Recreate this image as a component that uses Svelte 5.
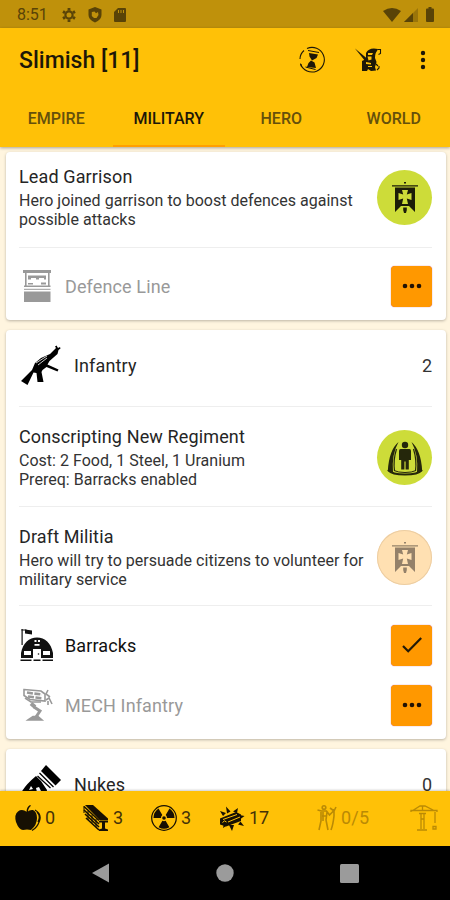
<script>
  const tabs = ['EMPIRE', 'MILITARY', 'HERO', 'WORLD'];
  const active = 'MILITARY';
  const resources = [
    { icon: 'apple', value: '0' },
    { icon: 'steel', value: '3' },
    { icon: 'uranium', value: '3' },
    { icon: 'energy', value: '17' },
    { icon: 'people', value: '0/5', dim: true },
    { icon: 'crane', value: '', dim: true }
  ];
</script>

{#snippet banner()}
  <svg width="28" height="34" viewBox="0 0 28 34" fill="currentColor">
    <path d="M13 1h2v1.500h-2zM1 4.200h26v1.300H1z" />
    <path fill-rule="evenodd" d="M4 6.500h20v24.500l-6-6h-8l-6 6zM11 9l1.200 4.500L7.500 12v7l4.700-1.500L11 23h6l-1.200-5.500 4.700 1.500v-7l-4.700 1.500L17 9z" />
    <path d="M12.200 26.500h3.600v2.500l-.8 3h-2l-.8-3z" />
  </svg>
{/snippet}

{#snippet action(title, lines, kind, dim = false)}
  <div class="action">
    <div class="copy">
      <h3>{title}</h3>
      <p>{lines[0]}<br />{lines[1]}</p>
    </div>
    <button class="round" class:dim aria-label={title}>
      {#if kind === 'banner'}
        {@render banner()}
      {:else}
        <svg width="36" height="36" viewBox="0 0 36 36" fill="#25270b">
          <circle cx="18" cy="5" r="3.200" />
          <path d="M13.500 9h9q1.500 0 1.500 2v9h-2.200v9.500h-3.200v-8h-1.200v8h-3.200V20H12v-9q0-2 1.500-2z" />
          <path d="M11.500 2Q2 10 .8 31L6 32.800Q4.500 14 11.500 2zM24.500 2Q34 10 35.200 31L30 32.800Q31.500 14 24.500 2z" />
          <path d="M9.500 9Q6 20 7.500 31M26.500 9Q30 20 28.500 31" fill="none" stroke="#25270b" stroke-width="1.200" />
          <path d="M1 30q4 4.500 17 4.500T35 30" fill="none" stroke="#25270b" stroke-width="2" />
          <path d="M7 30.500q4 2 11 2t11-2" fill="none" stroke="#25270b" />
        </svg>
      {/if}
    </button>
  </div>
{/snippet}

{#snippet building(label, kind, done, dim)}
  <div class="building" class:dim>
    <span class="thumb">
      {#if kind === 'defence'}
        <svg width="36" height="36" viewBox="0 0 36 36" fill="currentColor">
          <path d="M4 2h28v3H4zM5 23.500h26.500V34H5zM6 5h1.600v13H6zM29 5h1.600v13H29zM5 17.500h26.500V19H5z" />
          <path d="M9 7.500h18v4h-2v-1.500h-5v1.500h-3V10h-5v1.500H9zM9 15h5v1.600H9zM22 14.500h5v2h-5z" />
          <path d="M5 20.800h26.500v1H5z" />
        </svg>
      {:else if kind === 'barracks'}
        <svg width="36" height="36" viewBox="0 0 36 36" fill="currentColor">
          <path d="M2.500 2h1.200v16H2.500zM6 2.500l7 1v4l-7-1z" />
          <path d="M2.500 2.500h5v1h-5z" />
          <path fill-rule="evenodd" d="M2 31v-5C4 16 10 10.500 18 10.500S32 16 34 26v5H22v-9h-8v9zM5 24v4h7v-4zM24 24v4h7v-4zM15.500 13v2h2v-2zM19 13v2h2v-2zM15.500 17v1.800h5V17z" />
          <path d="M1.500 32.500h11v1.500h-11zM14.500 32.500h7v1.500h-7zM23.500 32.500H34v1.500H23.500z" />
          <circle cx="19.500" cy="27" r=".8" />
        </svg>
      {:else}
        <svg width="36" height="36" viewBox="0 0 36 36" fill="none" stroke="currentColor" stroke-width="1.600">
          <path d="M5 2.500l17 1.500 4 3v7l-15-1.500-6-4z" />
          <path d="M8 5.500l6 1 9 1M9 9.500l8 1 6 .8" stroke-width="2.600" stroke-dasharray="6 1.500" />
          <path d="M29 3l-2 4 4 3M27 13l3-2 3 6M29 14v4M6 11l6 4h10" />
          <path d="M12 16.500l4 3.500" stroke-width="4" />
          <path d="M15 20l6 4-4 6" stroke-width="3" />
          <path d="M9 33l5-3.500h5l4 3.500z" fill="currentColor" />
        </svg>
      {/if}
    </span>
    <span class="label">{label}</span>
    <button class="square" aria-label={label}>
      {#if done}
        <svg width="24" height="24" viewBox="0 0 24 24" fill="none" stroke="#211a08" stroke-width="2.200">
          <path d="M3 13l5.200 5.200L21.200 5" />
        </svg>
      {:else}
        <svg width="24" height="24" viewBox="0 0 24 24" fill="#211204">
          <circle cx="5" cy="12" r="2.300" /><circle cx="12" cy="12" r="2.300" /><circle cx="19" cy="12" r="2.300" />
        </svg>
      {/if}
    </button>
  </div>
{/snippet}

{#snippet resourceIcon(kind)}
  <svg width="28" height="28" viewBox="0 0 28 28" fill="currentColor">
    {#if kind === 'apple'}
      <path d="M12.500 8q0-5 3.500-7l1 .8q-3 2.200-3 6.200z" />
      <path d="M13 8Q8 4.500 4 7.500T2 18q3 8 7 8 4-1 8 0 6-5 6-12 0-6-4-8-3-.5-6 2z" />
      <path d="M21 6q7 4 4.500 11T18 26.500M23 8q4 4 1 10" fill="none" stroke="currentColor" stroke-width="1.200" />
    {:else if kind === 'steel'}
      <path d="M3 1h8l15 13.500v2H18z" />
      <path d="M2 2.500L17 16.500M2 6l15 14M3 10l14 13M4 14l13 12" fill="none" stroke="currentColor" stroke-width="1.600" />
      <path d="M17 17h9v1.500h-3v6l3 1V27h-9v-1.500l3-1v-6h-3z" />
      <path d="M2 2v7M6 7v9M10 11v8M14 15v8" stroke="currentColor" />
    {:else if kind === 'uranium'}
      <circle cx="14" cy="14" r="12.300" fill="none" stroke="currentColor" stroke-width="1.200" />
      <circle cx="14" cy="14" r="1.800" />
      <path d="M11 14H3.500q0-6 5-9.500L12.300 11q-1.300 1-1.300 3zM17 14h7.500q0-6-5-9.500L15.700 11q1.300 1 1.300 3zM12.400 16.800l-3.800 6.500q5.400 3 10.800 0l-3.800-6.500q-1.600.9-3.200 0z" />
    {:else if kind === 'energy'}
      <path d="M8 2.500l4.500 5-3.500 2zM20 4l-1 5-4-1.500zM26.500 12l-4 3-1-4zM26 22l-6-1.500 2.500-3zM14 27l-3-6h5zM5 24l1-5 3.500 2zM2 7l6 2-3 3z" />
      <path d="M2 14.500L18 8l5 2.500v6.500L8 22.500l-6-2z" />
      <path d="M5 15.500l14-5M4.500 18.500q2-3 4-.5M10 18l12-5" fill="none" stroke="#ffc107" stroke-width="1" />
    {:else if kind === 'people'}
      <g fill="none" stroke="currentColor" stroke-width="1.600">
        <circle cx="8" cy="3.500" r="1.800" />
        <path d="M1.500 6l4 1h5l3 4 4-4M5 8v9L3 26M11 8l-1 8 2 10M7 8v9M6 12h4M18 5v7q-1 9-3 14M14 4l4 3 2-4" />
      </g>
    {:else}
      <g fill="none" stroke="currentColor" stroke-width="1.300">
        <path d="M1 8V6.500h26V8M2 7l8-5h5l10 5M12.500 2v5M9 9.500h7M11 9v16M14 9v16M11 15h3M7 26h10M25 8v11M23 22.500h3V25h-3z" />
      </g>
    {/if}
  </svg>
{/snippet}

<div class="phone">
  <div class="status">
    <span class="time">8:51</span>
    <svg class="gear" width="14" height="14" viewBox="0 0 14 14">
      <circle cx="7" cy="7" r="3.600" fill="none" stroke="currentColor" stroke-width="2.200" />
      <path d="M7 0v2.500M7 11.500V14M1 3.500l2 1.200M11 9.300l2 1.200M1 10.500l2-1.200M11 4.700l2-1.200" stroke="currentColor" stroke-width="2.800" />
    </svg>
    <svg class="shield" width="14" height="16" viewBox="0 0 14 16">
      <path fill="currentColor" fill-rule="evenodd" d="M7 0l6.500 2.500V8q0 5-6.500 7.500Q.5 13 .5 8V2.500zM3.800 5v4l2.200 2h2.500L10.500 8 10 5 8 6.200 6.500 4.500z" />
    </svg>
    <svg width="12" height="14" viewBox="0 0 12 14"><path fill="currentColor" fill-rule="evenodd" d="M4 0h7q1 0 1 1v12q0 1-1 1H1q-1 0-1-1V4zM4 2v3h1V2zM6.500 2v3h1V2zM9 2v3h1V2z" /></svg>
    <span class="grow"></span>
    <svg width="18" height="14" viewBox="0 0 18 14"><path fill="currentColor" d="M0 3q9-6 18 0L9 14z" /></svg>
    <svg class="signal" width="14" height="14" viewBox="0 0 14 14"><path fill="currentColor" opacity=".35" d="M14 0v14H0z" /><path fill="currentColor" d="M9 5v9H0z" /></svg>
    <svg width="8" height="15" viewBox="0 0 8 15"><path fill="currentColor" d="M2.500 0h3v1.500H7q1 0 1 1V14q0 1-1 1H1q-1 0-1-1V2.500q0-1 1-1h1.500z" /></svg>
  </div>

  <header>
    <div class="toolbar">
      <h1>Slimish [11]</h1>
      <svg class="glass" width="28" height="28" viewBox="0 0 28 28">
        <path d="M9 2.500A12.300 12.300 0 1 1 2.500 18M2 13Q2 8 6 4.500" fill="none" stroke="currentColor" stroke-width="1.100" />
        <path d="M11 7l9 1.500-1.500 3.500-4.500 2.500-2.500-4zM13 14.500l3.500 2 1.500 5.500-9-1 1.500-4zM2 17l2 2-1 2z" fill="currentColor" />
        <path d="M10 4.500l11 2M7.500 21l10 2.500" fill="none" stroke="currentColor" />
      </svg>
      <svg class="knight" width="28" height="26" viewBox="0 0 28 26" fill="currentColor">
        <path d="M1 1.500l12 10-1.500 3z" />
        <path d="M12 6q3-6 12-4l-1 2q-2 2-2 7l1.500 4-1.500 5 1 3.500-5 .5-3-2-1 2H8V14l4-2z" />
        <path d="M23.500 2.500h3v4l-2 1M22 17l2 2M23 23l2-2v-2" fill="none" stroke="currentColor" stroke-width="1.100" />
        <path d="M14 6h5l-1 2h-4zM13.500 9.500h4v3l-3 1zM12 15l5 1v1.500l-5-.5zM14 19h4v1h-4z" fill="#ffc107" />
      </svg>
      <svg width="6" height="20" viewBox="0 0 6 20" fill="currentColor"><circle cx="3" cy="3" r="2.200" /><circle cx="3" cy="10" r="2.200" /><circle cx="3" cy="17" r="2.200" /></svg>
    </div>
    <nav>
      {#each tabs as tab}
        <button class="tab" class:active={tab === active}>{tab}</button>
      {/each}
    </nav>
  </header>

  <main>
    <section class="card first">
      {@render action('Lead Garrison', ['Hero joined garrison to boost defences against', 'possible attacks'], 'banner')}
      <div class="buildings solo">{@render building('Defence Line', 'defence', false, true)}</div>
    </section>

    <section class="card">
      <div class="unit">
        <svg width="42" height="42" viewBox="0 0 42 42" fill="currentColor">
          <path d="M2 36L13 25l3-7 6-5 9-4 6-6-1-1.500 1.500-1L39 3l2-1 .5 1.500-2 1.500-1 4-8 7-2 3.500 11 5-1 2-11-4.500-4 3-1 2 2 10h-6l-1-9-3-.5L8.500 40z" />
          <path d="M17 18l11-7M19 20l9-7" stroke="#fff" stroke-width=".8" />
        </svg>
        <span class="label">Infantry</span>
        <span class="count">2</span>
      </div>
      {@render action('Conscripting New Regiment', ['Cost: 2 Food, 1 Steel, 1 Uranium', 'Prereq: Barracks enabled'], 'recruit')}
      {@render action('Draft Militia', ['Hero will try to persuade citizens to volunteer for', 'military service'], 'banner', true)}
      <div class="buildings">
        {@render building('Barracks', 'barracks', true, false)}
        {@render building('MECH Infantry', 'mech', false, true)}
      </div>
    </section>

    <section class="card">
      <div class="unit">
        <svg width="42" height="42" viewBox="0 0 42 42" fill="currentColor">
          <path d="M27 1l15 15-5.500 5.500L22 7z" />
          <path d="M20.500 9l14 14M18.500 12l13 12" stroke="currentColor" stroke-width="1.300" />
          <path fill-rule="evenodd" d="M17 12l5 5 6 9-1 6-3-1-4-8-3 1 1 4-6 3H1q4-9 16-19zM12 22l-2 4 4-1z" />
        </svg>
        <span class="label">Nukes</span>
        <span class="count">0</span>
      </div>
    </section>
  </main>

  <footer>
    {#each resources as r}
      <div class="resource {r.icon}" class:dim={r.dim}>
        {@render resourceIcon(r.icon)}<span>{r.value}</span>
      </div>
    {/each}
  </footer>

  <div class="system">
    <svg width="18" height="20" viewBox="0 0 18 20"><path d="M0 10L17 .5v19z" /></svg>
    <svg width="18" height="18" viewBox="0 0 18 18"><circle cx="9" cy="9" r="8.700" /></svg>
    <svg width="19" height="19" viewBox="0 0 19 19"><rect width="19" height="19" rx="1.500" /></svg>
  </div>
</div>

<style>
  :global(body) { margin: 0; }
  .phone {
    width: 450px;
    height: 900px;
    display: flex;
    flex-direction: column;
    overflow: hidden;
    background: #fff5df;
    color: #252525;
    font-family: Roboto, sans-serif;
  }
  svg { display: block; flex: none; }
  button { border: 0; padding: 0; font: inherit; color: inherit; }
  h1, h3, p { margin: 0; font-weight: 400; }
  .status {
    flex: none;
    height: 28px;
    box-sizing: border-box;
    display: flex;
    align-items: center;
    padding: 1px 16px 0 17px;
    background: #bf910b;
    color: #594307;
  }
  .time { width: 45px; font-size: 16px; }
  .shield { margin: 0 12px; }
  .grow { flex: 1; }
  .signal { margin: 0 8px 0 3px; }
  header {
    flex: none;
    position: relative;
    z-index: 1;
    background: #ffc107;
    height: 119px;
    box-shadow: 0 1px 3px #0005;
  }
  .toolbar { height: 62px; padding: 1px 24px 1px 19px; display: flex; align-items: center; color: #1d1708; }
  h1 { flex: 1; font-size: 23px; font-weight: 500; }
  .glass { margin-right: 28px; }
  .knight { margin-right: 38px; }
  nav { display: flex; height: 55px; }
  .tab { flex: 1; background: none; font-size: 16px; color: #66500b; font-weight: 500; box-sizing: border-box; border-bottom: 2px solid transparent; }
  .tab.active { color: #1d1708; border-color: #ffa000; }
  main { flex: 1; min-height: 0; overflow: hidden; padding: 5px 4px 0 6px; display: flex; flex-direction: column; gap: 10px; }
  .card { flex: none; background: #fff; border-radius: 4px; box-shadow: 0 1px 3px #0004; padding: 0 14px 0 13px; }
  .action { height: 100px; box-sizing: border-box; display: flex; padding-top: 19px; border-bottom: 1px solid #eee; }
  .action + .action { height: 99px; }
  .first .action { height: 96px; padding-top: 14px; }
  .copy { flex: 1; min-width: 0; white-space: nowrap; }
  h3 { font-size: 18px; line-height: 22px; letter-spacing: .13px; }
  p { font-size: 16px; line-height: 18.500px; margin-top: 4px; color: #333; letter-spacing: .02px; }
  .round { width: 55px; height: 55px; margin-top: 4px; border-radius: 50%; background: #cddc39; display: grid; place-items: center; color: #1c1d08; }
  .round.dim { background: #ffe0b2; color: #94816a; box-shadow: inset 0 0 0 1px #eccda2; }
  .unit { height: 77px; box-sizing: border-box; display: flex; align-items: center; padding-bottom: 5px; border-bottom: 1px solid #eee; color: #000; }
  .unit .label { margin-left: 13px; color: #252525; }
  .label { flex: 1; font-size: 18px; letter-spacing: .13px; }
  .count { font-size: 18px; color: #333; }
  .buildings { padding: 9px 0 4px; }
  .solo { padding: 8px 0 4px; }
  .building { height: 60px; display: flex; align-items: center; color: #111; }
  .building.dim { color: #999; }
  .thumb { width: 46px; }
  .square { width: 41px; height: 41px; border-radius: 4px; background: #ff9800; display: grid; place-items: center; box-shadow: 0 0 1px #b36; }
  footer { flex: none; position: relative; height: 55px; box-sizing: border-box; display: flex; align-items: center; padding: 0 0 2px 14px; background: #ffc107; color: #171003; box-shadow: 0 -1px 2px #0003; }
  .resource { width: 68px; flex: none; display: flex; align-items: center; gap: 3px; font-size: 18px; color: #171003; }
  .resource span { color: #453207; }
  .resource.energy { width: 98px; }
  .resource.people { width: 94px; gap: 0; }
  .resource.people span { margin-left: -3px; letter-spacing: .2px; }
  .resource.dim, .resource.dim span { color: #ba8a05; }
  .system { flex: none; height: 54px; display: flex; align-items: center; justify-content: space-between; padding: 0 91px 0 92px; background: #000; box-sizing: border-box; fill: #9b9b9b; }
</style>
